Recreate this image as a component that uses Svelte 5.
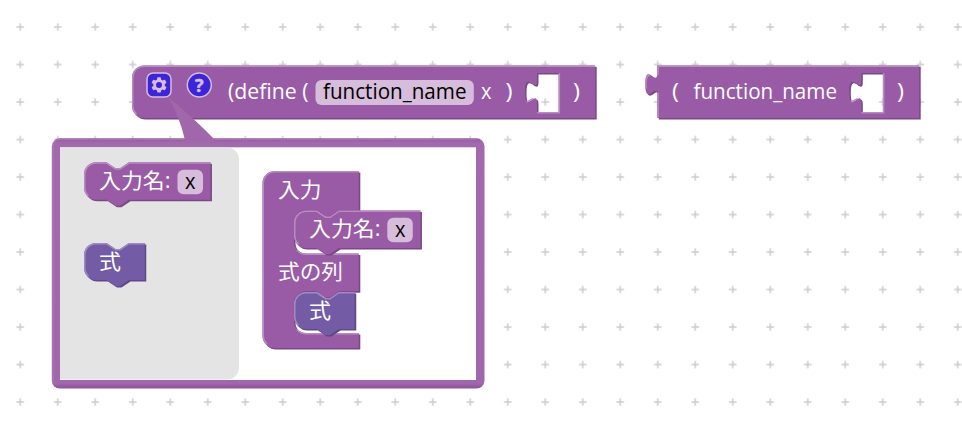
<script>
  const tab = 'c 0,10 -8,-8 -8,7.5 s 8,-2.5 8,7.5';
  const hole = (x) => `M ${x},5 v 5 ${tab} v 6 h 14.4 v -26 z`;
  const holeLight = (x) => `M ${x + 14.9},5.5 v 26 h -14.4 M ${x - 6.6},24.3 l 3.7,-2.1`;

  const statement = (w, h) => ({
    body: `M 0,8 A 8,8 0 0 1 8,0 H 15 l 6,4 3,0 6,-4 H ${w} V ${h} H 30 l -6,4 -3,0 -6,-4 H 8 A 8,8 0 0 1 0,${h - 8} z`,
    lightPath: `M 2.7,${h - 2.9} A 7.5,7.5 0 0 1 0.5,${h - 8} V 8 A 7.5,7.5 0 0 1 8,0.5 H 15 l 6,4 3,0 6,-4 H ${w - 0.5}`
  });

  const purple = { fill: '#995ba5', dark: '#7a4984', light: '#b88cc0' };
  const violet = { fill: '#745ba5', dark: '#5d4984', light: '#9e8cc0' };
  const inputName = statement(84.3, 25);
  const expression = statement(40.5, 24.7);

  const blocks = [
    {
      x: 132, y: 65.5, ...purple,
      body: `M 0,8 A 8,8 0 0 1 8,0 H 308.8 V 35 H 8 A 8,8 0 0 1 0,27 z ${hole(270)}`,
      lightPath: `M 2.7,32.1 A 7.5,7.5 0 0 1 0.5,27 V 8 A 7.5,7.5 0 0 1 8,0.5 H 308.3 ${holeLight(270)}`
    },
    {
      x: 657.3, y: 65.5, ...purple,
      body: `M 0,0 H 174.6 V 35 H 0 V 20 c 0,-10 -8,8 -8,-7.5 s 8,2.5 8,-7.5 z ${hole(136)}`,
      lightPath: `M 0.5,34.5 V 18.5 M -7.4,15 q -0.7,-8.5 2.2,-8.5 M 0.5,6 V 0.5 H 174.1 ${holeLight(136)}`
    }
  ];

  const container = {
    x: 262.5, y: 171, ...purple,
    body: 'M 0,8 A 8,8 0 0 1 8,0 H 64.2 V 26 H 51 l -6,4 -3,0 -6,-4 H 29 a 8,8 0 0 0 -8,8 V 47 a 8,8 0 0 0 8,8 H 64.2 V 80.2 H 51 l -6,4 -3,0 -6,-4 H 29 a 8,8 0 0 0 -8,8 V 100 a 8,8 0 0 0 8,8 H 64.2 V 118 H 8 A 8,8 0 0 1 0,110 z',
    lightPath: 'M 2.7,115.1 A 7.5,7.5 0 0 1 0.5,110 V 8 A 7.5,7.5 0 0 1 8,0.5 H 63.7 M 23.2,53 A 8.5,8.5 0 0 0 29,55.5 H 63.7 M 23.2,106 A 8.5,8.5 0 0 0 29,108.5 H 63.7'
  };
  const mutatorBlocks = [
    { x: 84, y: 162.3, ...purple, ...inputName },
    { x: 84, y: 243, ...violet, ...expression },
    container,
    { x: 294, y: 210.5, ...purple, ...inputName },
    { x: 294, y: 292, ...violet, ...expression }
  ];

  const fields = [
    { x: 315.5, y: 80, w: 158.3, h: 25 },
    { x: 177.5, y: 169.7, w: 25.5, h: 24.5 },
    { x: 387.3, y: 217.8, w: 25.5, h: 24.5 }
  ];

  const labels = [
    { t: '(define (', x: 228, y: 98.7, w: 80.5 },
    { t: 'function_name', x: 323, y: 98.7, w: 143.5, ink: true },
    { t: 'x', x: 481, y: 98.7, w: 10.5 },
    { t: ')', x: 505.5, y: 98.7, w: 7 },
    { t: ')', x: 573, y: 98.7, w: 7 },
    { t: '(', x: 672, y: 98.7, w: 7 },
    { t: 'function_name', x: 693.5, y: 98.7, w: 143.5 },
    { t: ')', x: 897, y: 98.7, w: 7 },
    { t: '入力名:', x: 99, y: 188.3, w: 71.5 },
    { t: 'x', x: 185, y: 189.3, w: 10.5, ink: true },
    { t: '式', x: 99, y: 268.8, w: 22 },
    { t: '入力', x: 278, y: 196.9, w: 43.5 },
    { t: '入力名:', x: 309, y: 236.3, w: 71.5 },
    { t: 'x', x: 395, y: 237.3, w: 10.5, ink: true },
    { t: '式の列', x: 278, y: 278.8, w: 65 },
    { t: '式', x: 309, y: 317.8, w: 22 }
  ];
</script>

{#snippet block(b)}
  <g transform="translate({b.x} {b.y}) scale(1.5)">
    <path d={b.body} fill={b.dark} fill-rule="evenodd" transform="translate(1 1)" />
    <path d={b.body} fill={b.fill} fill-rule="evenodd" />
    <path class="light" d={b.lightPath} stroke={b.light} />
  </g>
{/snippet}

<svg class="workspace" width="962" height="426" viewBox="0 0 962 426">
  <defs>
    <pattern id="grid" x="1.5" y="8.3" width="37.5" height="37.5" patternUnits="userSpaceOnUse">
      <path d="M 15 18.75 h 7.5 M 18.75 15 v 7.5" stroke="#ccc" stroke-width="1.5" />
    </pattern>
    <linearGradient id="rim" x1="0" y1="0" x2="0" y2="1">
      <stop offset="0" stop-color="#975ba3" />
      <stop offset="0.02" stop-color="#a269ad" />
      <stop offset="0.98" stop-color="#a067aa" />
      <stop offset="1" stop-color="#8f4f9b" />
    </linearGradient>
  </defs>
  <rect width="962" height="426" fill="url(#grid)" />

  {#each blocks as b}{@render block(b)}{/each}

  <g class="icon" transform="translate(147 73) scale(1.5)">
    <rect class="shape" width="16" height="16" rx="4" />
    <path fill="#fff" d="m4.203,7.296 0,1.368 -0.92,0.677 -0.11,0.41 0.9,1.559 0.41,0.11 1.043,-0.457 1.187,0.683 0.127,1.134 0.3,0.3 1.8,0 0.3,-0.299 0.127,-1.138 1.185,-0.682 1.046,0.458 0.409,-0.11 0.9,-1.559 -0.11,-0.41 -0.92,-0.677 0,-1.366 0.92,-0.677 0.11,-0.41 -0.9,-1.559 -0.409,-0.109 -1.046,0.458 -1.185,-0.682 -0.127,-1.138 -0.3,-0.299 -1.8,0 -0.3,0.3 -0.126,1.135 -1.187,0.682 -1.043,-0.457 -0.41,0.11 -0.899,1.559 0.108,0.409z" />
    <circle fill="#00f" cx="8" cy="8" r="2" />
  </g>
  <g class="icon" transform="translate(187.3 73) scale(1.5)">
    <circle class="shape" cx="8" cy="8" r="8" />
    <text class="help" x="8" y="12.6">?</text>
  </g>

  <path d="M 168,97 Q 179,115 185,140 H 215 Q 197,121 168,97 z" fill="#a067aa" />
  <rect x="51.8" y="138.3" width="432.7" height="250.2" rx="8" fill="url(#rim)" />
  <path d="M 53,383 V 147 Q 53,139.2 61,139.2 H 476" fill="none" stroke="#b183ba" stroke-width="0.8" />
  <path d="M 185,138 h 28 v 5 h -28 z" fill="#a067aa" />
  <rect x="60" y="147.3" width="416" height="232.7" fill="#fff" />
  <path d="M 60,147.5 H 227 a 12,12 0 0 1 12,12 V 367.5 a 12,12 0 0 1 -12,12 H 60 z" fill="#e4e4e4" />

  {#each mutatorBlocks as b}{@render block(b)}{/each}

  {#each fields as f}
    <rect x={f.x} y={f.y} width={f.w} height={f.h} rx="6" fill="#d6bddb" />
  {/each}
  {#each labels as l}
    <text class="label" class:ink={l.ink} x={l.x} y={l.y} textLength={l.w} lengthAdjust="spacingAndGlyphs">{l.t}</text>
  {/each}
</svg>

<style>
  :global(body) { background: #fff; overflow: hidden; }
  .workspace { display: block; }
  .light { fill: none; stroke-width: 1; stroke-linecap: round; }
  .icon { opacity: 0.6; }
  .shape { fill: #00f; stroke: #fff; stroke-width: 1; }
  .help { fill: #fff; stroke: #fff; stroke-width: 0.3; font: bold 12px "Open Sans", "Noto Sans", sans-serif; text-anchor: middle; }
  .label { fill: #fff; font: 21px "Open Sans", "Noto Sans CJK JP", sans-serif; white-space: pre; }
  .ink { fill: #000; }
</style>
